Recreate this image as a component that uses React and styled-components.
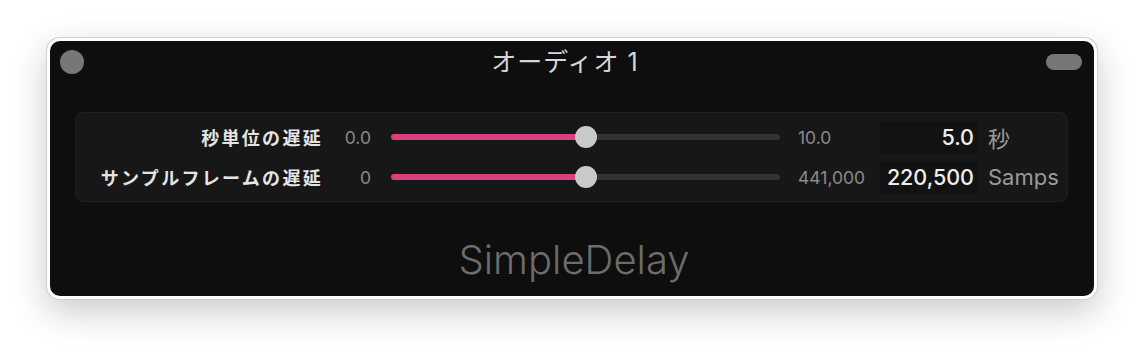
import styled, { createGlobalStyle } from 'styled-components';

const GlobalStyle = createGlobalStyle`
  html, body {
    margin: 0;
    padding: 0;
    background: #ffffff;
  }
  body {
    font-family: 'Inter', 'Noto Sans CJK JP', sans-serif;
    -webkit-font-smoothing: antialiased;
  }
`;

const params = [
  { label: '秒単位の遅延', min: '0.0', max: '10.0', value: '5.0', unit: '秒', ratio: 0.5 },
  { label: 'サンプルフレームの遅延', min: '0', max: '441,000', value: '220,500', unit: 'Samps', ratio: 0.5 }
];

export default function App() {
  return (
    <>
      <GlobalStyle />
      <Page>
        <Window>
          <TitleBar>
            <CloseDot />
            <Title>オーディオ 1</Title>
            <Pill />
          </TitleBar>
          <Panel>
            {params.map((p) => (
              <Row key={p.label}>
                <Label>{p.label}</Label>
                <Bound>{p.min}</Bound>
                <Slider>
                  <Fill style={{ width: `${p.ratio * 100}%` }} />
                  <Thumb style={{ left: `${p.ratio * 100}%` }} />
                </Slider>
                <MaxBound>{p.max}</MaxBound>
                <ValueBox>{p.value}</ValueBox>
                <Unit>{p.unit}</Unit>
              </Row>
            ))}
          </Panel>
          <PluginName>SimpleDelay</PluginName>
        </Window>
      </Page>
    </>
  );
}

const Page = styled.div`
  width: 1144px;
  height: 356px;
  padding: 38px 0 0 47px;
  box-sizing: border-box;
`;

const Window = styled.div`
  width: 1050px;
  height: 261px;
  box-sizing: border-box;
  border: 3px solid #ffffff;
  border-radius: 13px;
  background: #0e0e0e;
  box-shadow: 0 0 0 1px #cfcfcf, 0 12px 36px rgba(0, 0, 0, 0.22);
  display: flex;
  flex-direction: column;
  overflow: hidden;
`;

const TitleBar = styled.div`
  height: 42px;
  display: flex;
  align-items: center;
  justify-content: space-between;
  padding: 0 12px 0 10px;
`;

const CloseDot = styled.div`
  width: 24px;
  height: 24px;
  border-radius: 50%;
  background: #777777;
`;

const Pill = styled.div`
  width: 36px;
  height: 16px;
  border-radius: 8px;
  background: #777777;
`;

const Title = styled.div`
  color: #d6d6d6;
  font-size: 25px;
  letter-spacing: 1px;
  line-height: 1;
`;

const Panel = styled.div`
  margin: 29px 26px 0 25px;
  padding: 4px 0;
  background: #171717;
  border: 1px solid #202020;
  border-radius: 8px;
  display: flex;
  flex-direction: column;
`;

const Row = styled.div`
  height: 40px;
  display: flex;
  align-items: center;
`;

const Label = styled.div`
  width: 247px;
  text-align: right;
  color: #e4e4e4;
  font-size: 18px;
  font-weight: 700;
  letter-spacing: 2.3px;
  white-space: nowrap;
`;

const Bound = styled.div`
  width: 48px;
  text-align: right;
  color: #8a8a8a;
  font-size: 17.5px;
`;

const MaxBound = styled(Bound)`
  width: 100px;
  text-align: left;
  box-sizing: border-box;
  padding-left: 18px;
`;

const Slider = styled.div`
  position: relative;
  width: 389px;
  height: 6px;
  margin-left: 20px;
  border-radius: 3px;
  background: #333333;
`;

const Fill = styled.div`
  height: 100%;
  border-radius: 3px;
  background: #dc3f7d;
`;

const Thumb = styled.div`
  position: absolute;
  top: 50%;
  width: 22px;
  height: 22px;
  border-radius: 50%;
  background: #c9c9c9;
  transform: translate(-50%, -50%);
`;

const ValueBox = styled.div`
  width: 98px;
  height: 32px;
  box-sizing: border-box;
  padding-right: 4px;
  background: #121212;
  color: #eeeeee;
  font-size: 21.5px;
  font-weight: 500;
  line-height: 32px;
  text-align: right;
`;

const Unit = styled.div`
  margin-left: 10px;
  color: #9a9a9a;
  font-size: 22px;
`;

const PluginName = styled.div`
  margin-top: 34px;
  text-align: center;
  color: #6c6c6c;
  font-size: 40px;
  font-weight: 300;
  line-height: 48px;
  padding-left: 4px;
`;
